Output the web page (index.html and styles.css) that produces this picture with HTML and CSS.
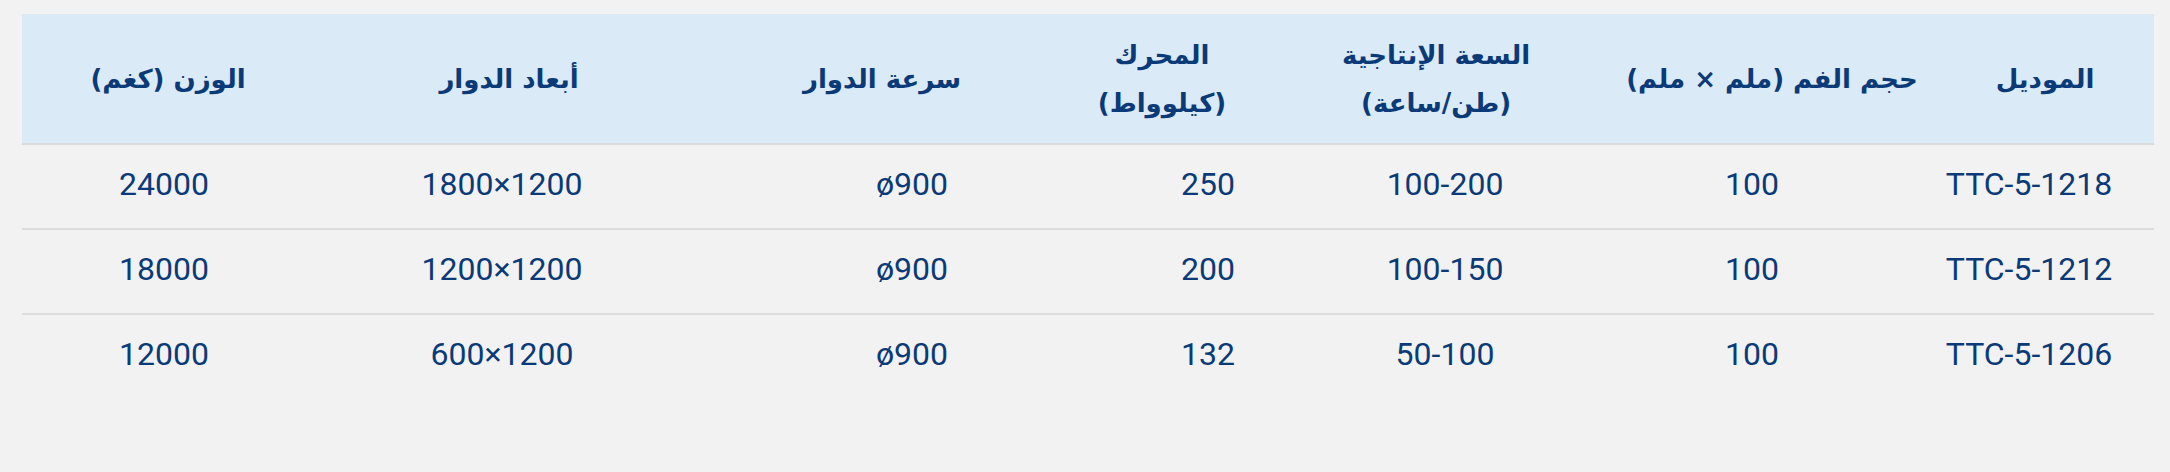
FILE: index.html
```html
<!DOCTYPE html>
<html lang="ar" dir="rtl">
<head>
<meta charset="utf-8">
<title>جدول المواصفات</title>
<link rel="stylesheet" href="styles.css">
</head>
<body>
<div class="wrap">
  <div class="spec">
    <div class="head">
      <div class="th">الموديل</div>
      <div class="th">حجم الفم (ملم × ملم)</div>
      <div class="th">السعة الإنتاجية<br>(طن/ساعة)</div>
      <div class="th">المحرك<br>(كيلوواط)</div>
      <div class="th">سرعة الدوار</div>
      <div class="th">أبعاد الدوار</div>
      <div class="th">الوزن (كغم)</div>
    </div>
    <div class="body">
      <div class="row">
        <div class="td">TTC-5-1218</div>
        <div class="td">100</div>
        <div class="td">100-200</div>
        <div class="td">250</div>
        <div class="td">ø900</div>
        <div class="td">1800×1200</div>
        <div class="td">24000</div>
      </div>
      <div class="row">
        <div class="td">TTC-5-1212</div>
        <div class="td">100</div>
        <div class="td">100-150</div>
        <div class="td">200</div>
        <div class="td">ø900</div>
        <div class="td">1200×1200</div>
        <div class="td">18000</div>
      </div>
      <div class="row">
        <div class="td">TTC-5-1206</div>
        <div class="td">100</div>
        <div class="td">50-100</div>
        <div class="td">132</div>
        <div class="td">ø900</div>
        <div class="td">600×1200</div>
        <div class="td">12000</div>
      </div>
    </div>
  </div>
</div>
</body>
</html>
```
FILE: styles.css
```css
html, body {
  margin: 0;
  padding: 0;
  background: #f2f2f2;
}

.wrap {
  padding: 14px 16px 0 22px;
}

.spec {
  color: #0b3a78;
}

.head {
  display: grid;
  grid-template-columns: 218fr 328fr 344fr 204fr 356fr 390fr 292fr;
  background: #daeaf6;
  height: 129px;
}

.th {
  display: flex;
  align-items: center;
  justify-content: center;
  text-align: center;
  font-family: "DejaVu Sans", sans-serif;
  font-weight: bold;
  font-size: 26px;
  line-height: 48px;
  white-space: nowrap;
}

.row {
  display: grid;
  grid-template-columns: 250fr 304fr 310fr 164fr 428fr 392fr 284fr;
  border-top: 2px solid #dcdcdc;
  height: 83px;
}

.td {
  display: flex;
  justify-content: center;
  align-items: flex-start;
  padding-top: 15px;
  direction: ltr;
  unicode-bidi: isolate;
  font-family: Roboto, "Liberation Sans", sans-serif;
  font-size: 32px;
  line-height: 48px;
  white-space: nowrap;
}
```
